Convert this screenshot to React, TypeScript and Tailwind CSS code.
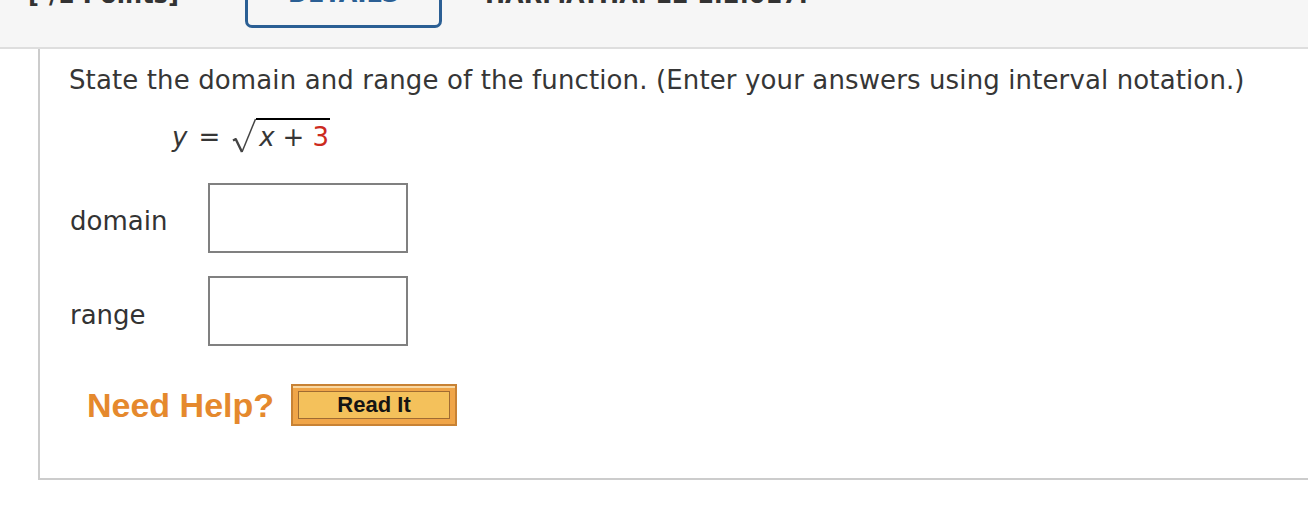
import React from "react";

export default function App() {
  return (
    <div className="w-[1308px] h-[520px] overflow-hidden bg-white text-[#333] font-['DejaVu_Sans',Verdana,sans-serif]">
      {/* clipped header strip */}
      <div className="h-[49px] overflow-hidden bg-[#f6f6f6] border-b-2 border-[#dedede]">
        <div className="flex items-end h-[68px] -mt-[40px] pl-[28px]">
          <span className="w-[217px] shrink-0 mb-[21px] text-[24px] leading-[24px] font-bold text-[#333] whitespace-nowrap">
            [-/1 Points]
          </span>
          <div className="w-[197px] h-[60px] shrink-0 border-[3px] border-[#2b5f94] rounded-[7px] flex items-end justify-center pb-[19px]">
            <span className="text-[24px] leading-[24px] font-bold text-[#2b5f94]">DETAILS</span>
          </div>
          <span className="ml-[43px] mb-[21px] text-[24px] leading-[24px] font-bold text-[#333] whitespace-nowrap">
            HARMATHAP12 1.2.017.
          </span>
        </div>
      </div>

      {/* question panel */}
      <div className="ml-[38px] h-[431px] border-l-2 border-b-2 border-[#cccccc] pl-[29px] pt-[13px]">
        <p className="text-[26px] leading-[36px] tracking-[0.12px] whitespace-nowrap text-[#363636]">
          State the domain and range of the function. (Enter your answers using interval notation.)
        </p>

        {/* equation */}
        <div className="mt-[20px] h-[34px] pl-[103px] flex items-start text-[26px] leading-[28px] text-[#363636]">
          <span className="pt-[5px] italic">y</span>
          <span className="pt-[5px] ml-[11px] mr-[12px]">=</span>
          <svg width="24" height="36" viewBox="0 0 24 36" className="shrink-0">
            <path d="M1 22.5 L3.8 21.2 L10 34" fill="none" stroke="#444" strokeWidth="2.4" strokeLinejoin="round" />
            <path d="M10 34 L23.5 1" fill="none" stroke="#444" strokeWidth="1.5" />
          </svg>
          <span className="border-t-2 border-black pt-[3px] pl-[3px] pr-[1px]">
            <span className="italic">x</span>
            <span className="mx-[8px]">+</span>
            <span className="text-[#cc2a1e]">3</span>
          </span>
        </div>

        {/* domain */}
        <div className="mt-[31px] flex items-center">
          <span className="w-[139px] text-[26px] leading-[32px] pt-[6px] pl-[1px]">domain</span>
          <div className="w-[200px] h-[70px] border-2 border-[#808080] bg-white" />
        </div>

        {/* range */}
        <div className="mt-[23px] flex items-center">
          <span className="w-[139px] text-[26px] leading-[32px] pt-[8px] pl-[1px]">range</span>
          <div className="w-[200px] h-[70px] border-2 border-[#808080] bg-white" />
        </div>

        {/* help */}
        <div className="mt-[38px] pl-[18px] flex items-center">
          <span className="font-['Liberation_Sans',Arial,sans-serif] font-bold text-[34px] leading-[40px] text-[#e5892d] whitespace-nowrap">
            Need Help?
          </span>
          <div className="ml-[17px] w-[166px] h-[42px] border-2 border-[#c88234] bg-[#f0a548] p-[5px] shadow-[inset_0_2px_0_#f9d9a4]">
            <div className="w-full h-full border border-[#a06b32] bg-[#f4c15b] flex items-center justify-center">
              <span className="font-['Liberation_Sans',Arial,sans-serif] font-bold text-[22px] leading-[22px] text-[#141414]">
                Read It
              </span>
            </div>
          </div>
        </div>
      </div>
    </div>
  );
}
